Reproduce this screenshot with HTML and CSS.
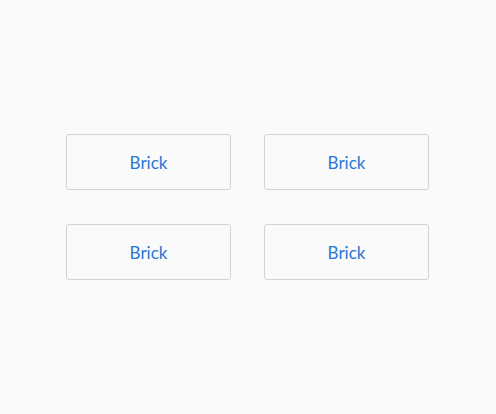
FILE: index.html
```html
<!DOCTYPE html>
<html>
<head>
<meta charset="utf-8">
<link rel="stylesheet" href="styles.css">
</head>
<body>
<div class="page">
  <div class="grid">
    <div class="brick">Brick</div>
    <div class="brick">Brick</div>
    <div class="brick">Brick</div>
    <div class="brick">Brick</div>
  </div>
</div>
</body>
</html>
```
FILE: styles.css
```css
html, body {
  margin: 0;
  padding: 0;
  background: #fafafa;
}
.page {
  box-sizing: border-box;
  width: 496px;
  height: 414px;
  padding-right: 1px;
  display: flex;
  align-items: center;
  justify-content: center;
}
.grid {
  display: grid;
  grid-template-columns: 165px 165px;
  grid-auto-rows: 56px;
  column-gap: 33px;
  row-gap: 34px;
}
.brick {
  box-sizing: border-box;
  border: 1px solid #d3d3d3;
  border-radius: 3px;
  display: flex;
  align-items: center;
  justify-content: center;
  font-family: Lato, "Open Sans", sans-serif;
  font-size: 17px;
  color: #2b77d3;
}
```
